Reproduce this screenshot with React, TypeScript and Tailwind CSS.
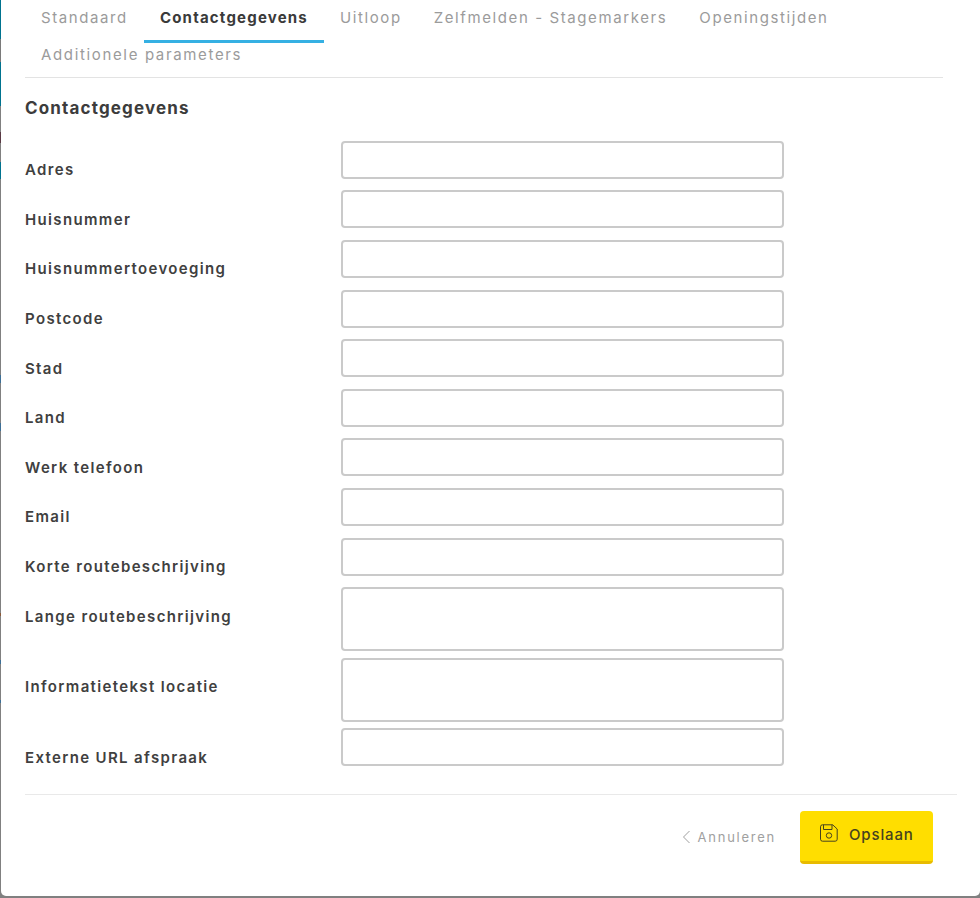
import React from "react";

const font = { fontFamily: '"Inter", "Open Sans", "Liberation Sans", sans-serif' };

const tabsRow1 = ["Standaard", "Contactgegevens", "Uitloop", "Zelfmelden - Stagemarkers", "Openingstijden"];

const rows: { label: string; tall?: boolean }[] = [
  { label: "Adres" },
  { label: "Huisnummer" },
  { label: "Huisnummertoevoeging" },
  { label: "Postcode" },
  { label: "Stad" },
  { label: "Land" },
  { label: "Werk telefoon" },
  { label: "Email" },
  { label: "Korte routebeschrijving" },
  { label: "Lange routebeschrijving", tall: true },
  { label: "Informatietekst locatie", tall: true },
  { label: "Externe URL afspraak" },
];

const strip: [number, string][] = [
  [39, "#00738f"], [23, "#7a7a7a"], [44, "#00738f"], [26, "#808080"], [11, "#5a3a44"], [19, "#808080"], [17, "#00738f"],
  [196, "#808080"], [8, "#3d6f96"], [40, "#808080"], [8, "#3d6f96"], [182, "#808080"], [3, "#8a5a3a"], [44, "#808080"], [4, "#3d6f96"], [36, "#808080"], [3, "#3d6f96"], [195, "#808080"],
];

function Tab({ label, active }: { label: string; active?: boolean }) {
  return (
    <div
      className={
        active
          ? "h-[43px] px-4 pt-[8px] text-[15px] leading-[20px] font-bold tracking-[1.2px] text-[#3a3a3a] border-b-[3px] border-[#35b0e3]"
          : "h-[43px] px-4 pt-[8px] text-[15px] leading-[20px] tracking-[1.6px] text-[#9b9b9b]"
      }
    >
      {label}
    </div>
  );
}

export default function App() {
  return (
    <div className="relative flex h-[898px] w-[980px] overflow-hidden bg-[#808080]" style={font}>
      <div className="flex w-px shrink-0 flex-col">
        {strip.map(([h, c], i) => (
          <div key={i} style={{ height: h, backgroundColor: c }} />
        ))}
      </div>
      <div className="mb-[2px] flex h-[896px] w-[979px] flex-col rounded-b-[5px] bg-white pl-6">
        <div className="w-[918px] border-b border-[#e3e3e3] h-[78px]">
          <div className="flex">
            {tabsRow1.map((t, i) => (
              <Tab key={t} label={t} active={i === 1} />
            ))}
          </div>
          <div className="px-4 pt-[2px] text-[15px] leading-[20px] tracking-[1.65px] text-[#9b9b9b]">Additionele parameters</div>
        </div>

        <h2 className="mt-[19px] h-[43.8px] text-[17px] leading-[22px] font-bold tracking-[1.15px] text-[#3c3c3c]">Contactgegevens</h2>

        <div className="flex flex-col">
          {rows.map((r) => (
            <div key={r.label} className={r.tall ? "flex h-[70.6px] items-start" : "flex h-[49.6px] items-start"}>
              <label className="w-[316px] pt-[19.4px] text-[15px] leading-[20px] font-semibold tracking-[1.35px] text-[#404040]">
                {r.label}
              </label>
              {r.tall ? (
                <textarea className="h-[64px] w-[443px] resize-none rounded-[4px] border-2 border-[#cacaca] bg-white" />
              ) : (
                <input className="h-[38px] w-[443px] rounded-[4px] border-2 border-[#cacaca] bg-white" />
              )}
            </div>
          ))}
        </div>

        <div className="mt-[16px] w-[932px] border-t border-[#e9e9e9]">
          <div className="flex h-[69px] items-start justify-end pt-[16px] pr-[24px]">
            <div className="mt-[16px] mr-[24px] flex items-center gap-[7px] text-[13px] leading-[20px] tracking-[1.75px] text-[#a0a0a0]">
              <svg width="9" height="14" viewBox="0 0 9 14" fill="none" stroke="#a0a0a0" strokeWidth="1">
                <path d="M7.5 1 1.5 7l6 6" />
              </svg>
              Annuleren
            </div>
            <button className="flex h-[53px] w-[133px] items-start rounded-[4px] border-b-[3px] border-[#e8bb00] bg-[#ffde00] pl-[20px] pt-[13px] text-[15px] leading-[22px] font-medium tracking-[0.85px] text-[#46421f]">
              <svg width="18" height="18" viewBox="0 0 18 18" fill="none" stroke="#46421f" strokeWidth="1" className="mr-[11px]">
                <path d="M2.5.8h10.2l4.5 4.2v10.2a2 2 0 0 1-2 2H2.5a2 2 0 0 1-2-2V2.800a2 2 0 0 1 2-2Z" />
                <path d="M3.500.8v4.700h8.500V.8" />
                <circle cx="9" cy="11.500" r="2.700" />
              </svg>
              Opslaan
            </button>
          </div>
        </div>
      </div>
    </div>
  );
}
